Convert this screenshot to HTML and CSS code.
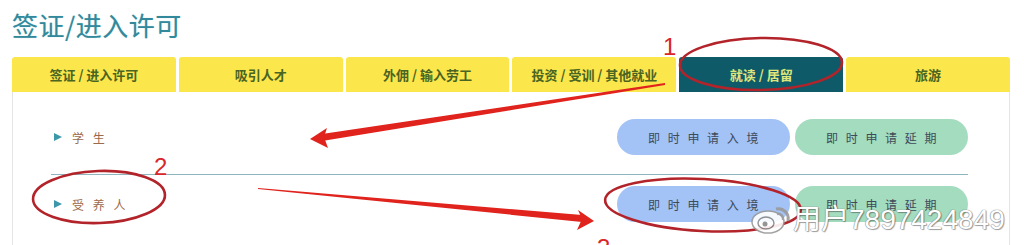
FILE: index.html
```html
<!DOCTYPE html>
<html lang="zh">
<head>
<meta charset="utf-8">
<title>签证/进入许可</title>
<link rel="stylesheet" href="styles.css">
</head>
<body>
<div class="page">
  <h1 class="title">签证/进入许可</h1>
  <nav class="tabs">
    <div class="tab">签证 / 进入许可</div>
    <div class="tab">吸引人才</div>
    <div class="tab">外佣 / 输入劳工</div>
    <div class="tab">投资 / 受训 / 其他就业</div>
    <div class="tab active">就读 / 居留</div>
    <div class="tab">旅游</div>
  </nav>
  <section class="panel">
    <div class="row">
      <div class="label"><span class="tri"></span><span class="label-text">学 生</span></div>
      <div class="actions">
        <a class="btn btn-blue">即 时 申 请 入 境</a>
        <a class="btn btn-green">即 时 申 请 延 期</a>
      </div>
    </div>
    <div class="divider"></div>
    <div class="row">
      <div class="label"><span class="tri"></span><span class="label-text">受 养 人</span></div>
      <div class="actions">
        <a class="btn btn-blue">即 时 申 请 入 境</a>
        <a class="btn btn-green">即 时 申 请 延 期</a>
      </div>
    </div>
  </section>
</div>

<svg class="marks" width="1024" height="245" viewBox="0 0 1024 245">
  <g fill="none" stroke="#b3232a" stroke-width="2.6">
    <ellipse cx="761" cy="64" rx="81" ry="26" transform="rotate(-1 761 64)"/>
    <ellipse cx="99" cy="197" rx="66" ry="26" transform="rotate(-2 99 197)"/>
    <ellipse cx="703" cy="205" rx="98" ry="26" transform="rotate(3 703 205)"/>
  </g>
  <g fill="#e0231c">
    <polygon points="665,83 322,134 322,141 665,85"/>
    <polygon points="310,139 327,128 324,137 328,148"/>
    <polygon points="258,188 582,215 582,222 258,189"/>
    <polygon points="594,221 578,210 582,219 577,230"/>
  </g>
  <g fill="#d8262a" font-family="'Liberation Sans', sans-serif" font-size="24">
    <text x="663" y="55">1</text>
    <text x="154" y="175">2</text>
    <text x="597" y="256">3</text>
  </g>
  <g class="wb-logo" opacity="0.9">
    <ellipse cx="768" cy="222" rx="16" ry="11" fill="#ffffff" stroke="#9a9a9a" stroke-width="1.5"/>
    <ellipse cx="766" cy="223" rx="8" ry="6" fill="#ffffff" stroke="#8a8a8a" stroke-width="1.5"/>
    <circle cx="765" cy="224" r="2.5" fill="#8a8a8a"/>
    <path d="M776 209 a10 10 0 0 1 12 12" fill="none" stroke="#9a9a9a" stroke-width="3"/>
    <path d="M777 214 a5 5 0 0 1 6 6" fill="none" stroke="#9a9a9a" stroke-width="2.5"/>
  </g>
</svg>
<div class="watermark">用户7897424849</div>
</body>
</html>
```
FILE: styles.css
```css
html, body {
  margin: 0;
  padding: 0;
  background: #ffffff;
}
body {
  width: 1024px;
  height: 245px;
  overflow: hidden;
  position: relative;
  font-family: "Noto Sans CJK SC", "Noto Sans", sans-serif;
}
.page {
  padding: 8px 14px 0 12px;
}
.title {
  margin: 0 0 15px 0;
  font-size: 26px;
  line-height: 34px;
  font-weight: 400;
  letter-spacing: 0.5px;
  color: #32899b;
  text-shadow: 0 0 1px rgba(50, 137, 155, 0.4);
}
.tabs {
  display: flex;
  gap: 3px;
  height: 35px;
}
.tab {
  flex: 1;
  display: flex;
  align-items: center;
  justify-content: center;
  background: #fbe74c;
  color: #4a6421;
  font-size: 13px;
  font-weight: 700;
  border-radius: 3px 3px 0 0;
}
.tab.active {
  background: #0f5a69;
  color: #dfe57a;
}
.panel {
  border: 1px solid #e4e4e4;
  border-top: none;
  padding: 27px 41px 0 38px;
  height: 150px;
}
.row {
  display: flex;
  align-items: center;
  justify-content: space-between;
  height: 36px;
  padding-left: 3px;
}
.label {
  display: flex;
  align-items: center;
  gap: 10px;
}
.tri {
  width: 0;
  height: 0;
  border-top: 4.5px solid transparent;
  border-bottom: 4.5px solid transparent;
  border-left: 8px solid #3a98a8;
}
.label-text {
  font-size: 12px;
  color: #9b6a4c;
  letter-spacing: 3px;
}
.actions {
  display: flex;
  gap: 5px;
}
.btn {
  display: flex;
  align-items: center;
  justify-content: center;
  width: 173px;
  height: 36px;
  border-radius: 18px;
  font-size: 12px;
  color: #3d4a5a;
  letter-spacing: 0.5px;
  word-spacing: 4px;
}
.btn-blue {
  background: #a3c2f6;
}
.btn-green {
  background: #a4dcbf;
}
.divider {
  height: 1px;
  background: #8fb6bf;
  margin: 19px 0 11px 0;
}
.marks {
  position: absolute;
  left: 0;
  top: 0;
  pointer-events: none;
}
.watermark {
  position: absolute;
  left: 793px;
  top: 202px;
  font-family: "Liberation Sans", "Noto Sans CJK SC", sans-serif;
  font-size: 28px;
  line-height: 36px;
  color: #ffffff;
  text-shadow: 0 0 1px #7a7a7a, 0 0 1px #7a7a7a, 1px 1px 1px rgba(0,0,0,0.35);
  white-space: nowrap;
}
```
